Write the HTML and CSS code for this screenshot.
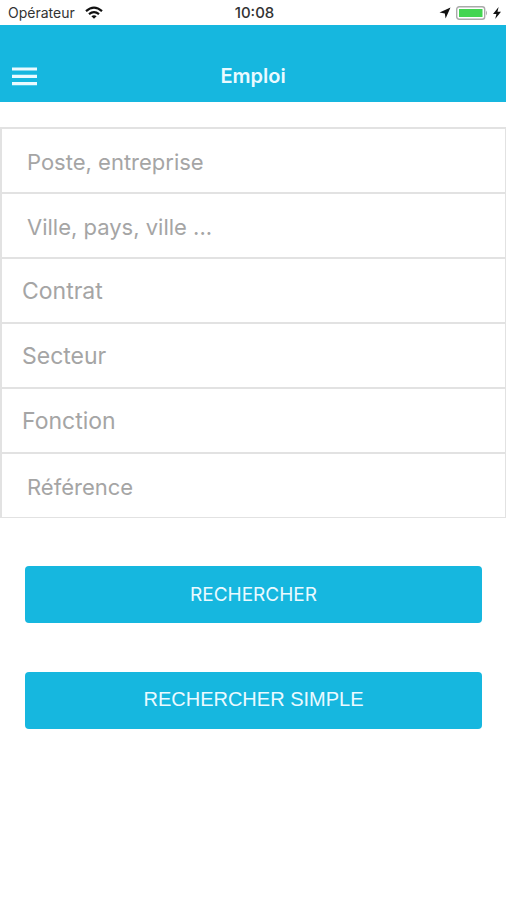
FILE: index.html
```html
<!DOCTYPE html>
<html lang="fr">
<head>
<meta charset="utf-8">
<meta name="viewport" content="width=device-width, initial-scale=1">
<title>Emploi</title>
<link rel="stylesheet" href="styles.css">
</head>
<body>
<div class="status">
  <div class="status-left">
    <span>Opérateur</span>
    <svg width="18" height="13" viewBox="0 0 18 13" aria-hidden="true"><g fill="none" stroke="#111" stroke-width="2.2"><path d="M1 5.2Q9-1.8 17 5.2"/><path d="M4 8.2Q9 4 14 8.2"/></g><path d="M6.4 10.2Q9 8.2 11.6 10.2L9 12.8Z" fill="#111"/></svg>
  </div>
  <time class="clock">10:08</time>
  <div class="status-right">
    <svg width="12" height="12" viewBox="0 0 12 12" aria-hidden="true"><path d="M11.5.5 6.6 11.5 5.8 6.4.5 5.6Z" fill="#111"/></svg>
    <svg width="32" height="14" viewBox="0 0 32 14" aria-hidden="true"><rect x=".7" y=".7" width="28" height="12.6" rx="2.5" fill="#fff" stroke="#aaa" stroke-width="1.4"/><rect x="3" y="3" width="23.5" height="8" fill="#43d551"/><path d="M30 4.5q2 2.5 0 5Z" fill="#aaa"/></svg>
    <svg width="8" height="12" viewBox="0 0 8 12" aria-hidden="true"><path d="M5.6 0 0 7h3.4L2.2 12 8 4.8H4.5Z" fill="#111"/></svg>
  </div>
</div>
<header class="bar">
  <button class="menu" type="button" aria-label="Menu">
    <svg width="25" height="19" viewBox="0 0 25 19" aria-hidden="true"><path d="M0 2h25M0 9.3h25M0 16.7h25" stroke="#eafaff" stroke-width="3.2"/></svg>
  </button>
  <h1 class="title">Emploi</h1>
</header>
<main>
  <form>
    <div class="fields">
      <input class="field" type="text" aria-label="Poste, entreprise" placeholder="Poste, entreprise">
      <input class="field" type="text" aria-label="Ville, pays" placeholder="Ville, pays, ville ...">
      <select class="field picker" aria-label="Contrat"><option>Contrat</option></select>
      <select class="field picker" aria-label="Secteur"><option>Secteur</option></select>
      <select class="field picker" aria-label="Fonction"><option>Fonction</option></select>
      <input class="field" type="text" aria-label="Référence" placeholder="Référence">
    </div>
    <div class="actions">
      <button class="action" type="submit">RECHERCHER</button>
      <button class="action simple" type="button">RECHERCHER SIMPLE</button>
    </div>
  </form>
</main>
</body>
</html>
```
FILE: styles.css
```css
* {
  box-sizing: border-box;
}

body {
  margin: 0;
  background: #fff;
  font-family: Inter, "Liberation Sans", sans-serif;
}

svg {
  display: block;
}

.status {
  display: grid;
  grid-template-columns: 1fr auto 1fr;
  align-items: center;
  height: 25px;
  padding: 0 5px 0 8px;
  color: #333;
  font-size: 14px;
}

.status-left,
.status-right {
  display: flex;
  align-items: center;
  gap: 10px;
}

.status-right {
  justify-content: flex-end;
  gap: 5px;
}

.clock {
  font-size: 15px;
  font-weight: 500;
}

.bar {
  display: grid;
  grid-template-columns: 1fr auto 1fr;
  align-items: center;
  padding: 25px 12px 0;
  height: 77px;
  background: #16b7df;
}

.menu {
  justify-self: start;
  padding: 0;
  border: 0;
  background: none;
}

.title {
  margin: 0;
  color: #eafaff;
  font-size: 20px;
  font-weight: 600;
}

.fields {
  display: grid;
  margin-top: 25px;
  border: solid #e2e2e2;
  border-width: 0 1px 1px 2px;
}

.field {
  width: 100%;
  height: 65px;
  padding: 2px 25px 0;
  border: 0;
  border-top: 2px solid #e2e2e2;
  border-radius: 0;
  background: #fff;
  color: #a5a5a5;
  font: 22px Inter, "Liberation Sans", sans-serif;
}

.field::placeholder {
  color: #a5a5a5;
  opacity: 1;
}

.picker {
  appearance: none;
  padding: 0 20px;
  font-size: 23px;
}

.actions {
  display: grid;
  gap: 49px;
  padding: 48px 24px 48px 25px;
}

.action {
  height: 57px;
  padding: 0;
  border: 0;
  border-radius: 4px;
  background: #16b7df;
  color: #eafaff;
  font: 19px Inter, "Liberation Sans", sans-serif;
}

.simple {
  padding-bottom: 2px;
  font: 20px "Liberation Sans", sans-serif;
}
```
